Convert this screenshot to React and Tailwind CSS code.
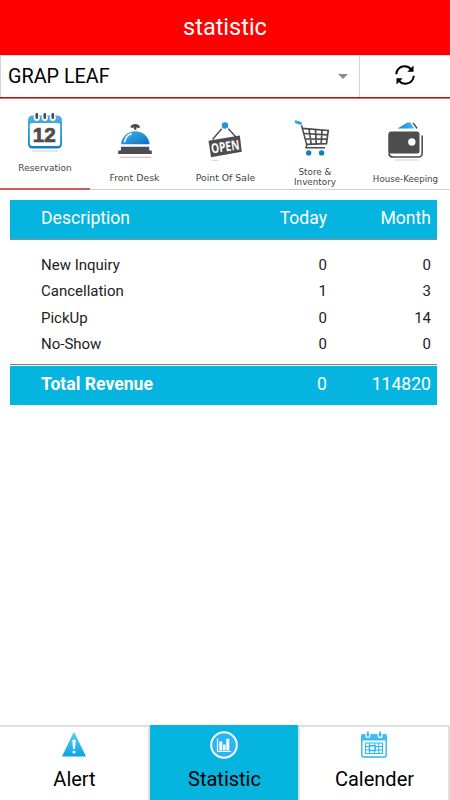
const ROWS = [
  { name: 'New Inquiry', today: '0', month: '0' },
  { name: 'Cancellation', today: '1', month: '3' },
  { name: 'PickUp', today: '0', month: '14' },
  { name: 'No-Show', today: '0', month: '0' },
]

function ReservationIcon() {
  return (
    <svg viewBox="0 0 34 40" className="w-[34px] h-10">
      <defs>
        <linearGradient id="cal" x1="0" y1="0" x2="0" y2="1">
          <stop offset="0" stopColor="#4fb4e4" />
          <stop offset="1" stopColor="#0d7fc4" />
        </linearGradient>
      </defs>
      <rect x="0" y="2.5" width="34" height="33" rx="4.5" fill="url(#cal)" />
      <rect x="1.8" y="10" width="30.4" height="23" rx="2.5" fill="#fff" />
      {[8.5, 16.5, 24.5].map((x) => (
        <g key={x}>
          <circle cx={x + 0.3} cy="4.8" r="3.1" fill="#fff" />
          <rect x={x - 1} y="0" width="2.6" height="6" rx="1.2" fill="#4d4d4f" />
        </g>
      ))}
      <text x="16.3" y="28.5" textAnchor="middle" fontSize="20" fontWeight="700" fontFamily="Liberation Sans, sans-serif" textLength="23" lengthAdjust="spacingAndGlyphs" fill="#4d4d4f" stroke="#4d4d4f" strokeWidth="0.7">12</text>
      <path d="M4 38h26" stroke="#cfcfcf" strokeWidth="1" />
    </svg>
  )
}

function BellIcon() {
  return (
    <svg viewBox="0 0 34 37" className="w-[34px] h-[37px]">
      <defs>
        <linearGradient id="bell" x1="0" y1="0" x2="1" y2="1">
          <stop offset="0" stopColor="#45b2e6" />
          <stop offset="1" stopColor="#0873bd" />
        </linearGradient>
      </defs>
      <path d="M12.5 4.500c0-2 2-3.400 4.700-3.400s4.800 1.400 4.800 3.400c-1.300.7-2 .3-3.600.1v2.200h-2.400v-2.200c-1.300.2-2.200.5-3.500-.1z" fill="#4d4d4f" />
      <path d="M3 21.200C3.500 13.500 10 8.300 17.200 8.300S31 13.500 31.600 21.200z" fill="url(#bell)" />
      <path d="M6.800 18.500c.7-4 3-6.400 6.200-7.600" stroke="#e6f5fc" strokeWidth="1.800" fill="none" strokeLinecap="round" />
      <path d="M3 23.800h28.200v3.400l2.600.6V31H.2v-3.200l2.800-.6z" fill="#4d4d4f" />
      <path d="M2 34.400h31" stroke="#cacaca" strokeWidth="1.400" />
    </svg>
  )
}

function OpenIcon() {
  return (
    <svg viewBox="0 0 34 42" className="w-[34px] h-[42px] overflow-visible">
      <path d="M4.500 17.500 13.700 6.800M20.300 6.800 28 15" stroke="#4d4d4f" strokeWidth="1.400" fill="none" />
      <circle cx="17" cy="3.500" r="3.200" fill="#1d97da" />
      <path d="M.5 18.800 31.800 13.500 33.800 29.800 3 35.300z" fill="#4d4d4f" />
      <text x="17.200" y="29.500" textAnchor="middle" fontSize="13.500" fontWeight="700" fontFamily="Open Sans, sans-serif" textLength="28.500" lengthAdjust="spacingAndGlyphs" fill="#fff" transform="rotate(-8 17 25)">OPEN</text>
      <path d="M3 38.300h8" stroke="#d6d6d6" strokeWidth="1" />
    </svg>
  )
}

function CartIcon() {
  return (
    <svg viewBox="0 0 42 37" className="w-[42px] h-[37px]">
      <path d="M2 1.800l4.600 1.500" stroke="#2aa5e2" strokeWidth="2.800" strokeLinecap="round" />
      <path d="M7.500 5.200 12.800 25l-1 2.800h19.200" stroke="#4d4d4f" strokeWidth="1.500" fill="none" strokeLinejoin="round" />
      <path d="M8.300 8.300 34.200 10.500 32.500 23.600 12.500 24.300M9.600 13.500 33.500 14.900M11 19 33 19.200M15 9l2.200 15M21.500 9.500l.7 14.500M28 10l-.8 14" stroke="#4d4d4f" strokeWidth="1.700" fill="none" />
      <circle cx="14.700" cy="32.900" r="2.700" fill="#0d7fc4" />
      <circle cx="27.600" cy="32.900" r="2.700" fill="#0d7fc4" />
    </svg>
  )
}

function WalletIcon() {
  return (
    <svg viewBox="0 0 36 41" className="w-9 h-[41px]">
      <defs>
        <linearGradient id="note" x1="0" y1="0" x2="1" y2="0">
          <stop offset="0" stopColor="#0d7fc4" />
          <stop offset="1" stopColor="#4cc0ee" />
        </linearGradient>
      </defs>
      <path d="M9.500 6.500 19.500.5h3l3.800 6z" fill="url(#note)" />
      <path d="M25.200 1 29.200 6.500" stroke="#4d4d4f" strokeWidth="1.300" />
      <path d="M34.200 13.500v17.500q0 4-4 4H5q-3.500 0-4-3" stroke="#4d4d4f" strokeWidth="1.600" fill="none" />
      <path d="M1.200 12v20" stroke="#4d4d4f" strokeWidth="1.400" />
      <rect x=".5" y="9.500" width="31" height="22" rx="2.500" fill="#4d4d4f" />
      <circle cx="23.800" cy="20" r="3.700" fill="#fff" />
      <path d="M6.500 38h24" stroke="#d0d0d0" strokeWidth="1" />
    </svg>
  )
}

function RefreshIcon() {
  return (
    <svg viewBox="0 0 20 20" className="w-5 h-5">
      <path d="M1.200 9.200C1.500 4.500 5 1.300 9.500 1.300c2.800 0 4.800 1 6.300 2.900M18.800 10.800C18.500 15.500 15 18.700 10.500 18.700c-2.800 0-4.800-1-6.300-2.900" stroke="#000" strokeWidth="2" fill="none" />
      <path d="M18.500.500v6.200h-6.200zM1.500 19.500v-6.200h6.200z" fill="#000" />
    </svg>
  )
}

function AlertIcon() {
  return (
    <svg viewBox="0 0 24 25" className="w-6 h-[25px]">
      <defs>
        <linearGradient id="warn" x1="0" y1="0" x2="0" y2="1">
          <stop offset="0" stopColor="#5fcdf7" />
          <stop offset="1" stopColor="#0aa3e4" />
        </linearGradient>
      </defs>
      <path d="M11 1.500q1-1.800 2 0L24 24.500H0z" fill="url(#warn)" />
      <path d="M10.300 8q1.700-1 3.400 0l-.7 9h-2z" fill="#fff" />
      <circle cx="12" cy="20" r="1.600" fill="#fff" />
    </svg>
  )
}

function ChartIcon() {
  return (
    <svg viewBox="0 0 28 28" className="w-7 h-7">
      <circle cx="14" cy="14" r="12.800" fill="#29b6f6" stroke="#fff" strokeWidth="2" />
      <path d="M7.500 7.500v13h13.500" stroke="#fff" strokeWidth="1.200" fill="none" />
      <path d="M9.300 10.500h3v9h-3zM13 13.500h2.600v6h-2.600zM16.300 7.800h3v11.700h-3z" fill="#fff" />
    </svg>
  )
}

function CalendarIcon() {
  return (
    <svg viewBox="0 0 26 27" className="w-[26px] h-[27px]">
      <rect x=".8" y="4" width="24.400" height="22" rx="1.500" fill="#fff" stroke="#29b6f6" strokeWidth="1.400" />
      <path d="M.3 9.500V4.500q0-1.500 1.500-1.500h22.400q1.500 0 1.500 1.500v5z" fill="#3ebcf7" />
      <path d="M5 2.500v2q0 2 1.900 2t1.900-2v-2M17.200 2.500v2q0 2 1.900 2t1.900-2v-2" stroke="#fff" strokeWidth="1.200" fill="none" />
      <path d="M6.900.500v4M19.100.500v4" stroke="#29b6f6" strokeWidth="1.700" />
      <path d="M4.500 12h17v10.500h-17zM4.500 15.500h17M4.500 19h17M8.500 12v10.500M13.800 12v10.500M17.800 12v10.500" stroke="#29b6f6" strokeWidth="1" fill="none" />
      <path d="M8.500 14.700h5.600v4.800H8.500z" fill="#fff" stroke="#29b6f6" strokeWidth="1.500" />
    </svg>
  )
}

const TABS = [
  { label: 'Reservation', Icon: ReservationIcon, pad: 'pt-[15px]', text: 'mt-[10px] text-[9px]' },
  { label: 'Front Desk', Icon: BellIcon, pad: 'pt-[25px] pr-px', text: 'mt-[13px] text-[9.4px]' },
  { label: 'Point Of Sale', Icon: OpenIcon, pad: 'pt-6', text: 'mt-[9px] pl-px text-[9.3px]' },
  { label: 'Store & Inventory', Icon: CartIcon, pad: 'pt-[22px]', text: 'mt-[10px] w-[50px] text-[8.800px]' },
  { label: 'House-Keeping', Icon: WalletIcon, pad: 'pt-6 pl-px', text: 'mt-[11px] text-[8.700px]' },
]

const NAV = [
  { label: 'Alert', Icon: AlertIcon, box: 'bg-white border-t-2 border-r-2 border-[#e0e0e0]', icon: 'pt-[5px] h-[39px]' },
  { label: 'Statistic', Icon: ChartIcon, box: 'bg-[#06b4e0] pt-0.5 border-r-2 border-[#e0e0e0]', icon: 'pt-1 h-[39px]' },
  { label: 'Calender', Icon: CalendarIcon, box: 'bg-white border-t-2 border-r-2 border-[#e0e0e0]', icon: 'pt-1 h-[39px]' },
]

export default function App() {
  return (
    <div className="w-[450px] h-[800px] flex flex-col bg-white overflow-hidden font-[Roboto,sans-serif] text-black">
      <header className="h-[55px] flex items-center justify-center bg-[#ff0000] text-white text-[23.5px]">
        statistic
      </header>

      {/* Property selector */}
      <div className="h-[43px] flex border-t border-t-[#dcdcdc] border-b border-b-[#ae1414] shadow-[0_1px_0_#d07070]">
        <div className="w-[360px] flex items-center justify-between pl-[7px] pr-[11px] border-x border-[#d4d4d4]">
          <span className="text-[19.8px]">GRAP LEAF</span>
          <svg viewBox="0 0 10 5" className="w-2.5 h-[5px]"><path d="M0 0h10L5 5z" fill="#8b8b8b" /></svg>
        </div>
        <div className="flex-1 flex items-center justify-center pb-[3px]">
          <RefreshIcon />
        </div>
      </div>

      {/* Module tabs */}
      <nav className="h-[92px] flex font-['DejaVu_Sans',sans-serif] text-[#444]">
        {TABS.map(({ label, Icon, pad, text }, i) => (
          <div
            key={label}
            className={`w-[90px] flex flex-col items-center ${pad} ${i === 0 ? 'border-b-2 border-[#cf5a5a]' : 'border-b border-[#d0d0d0]'}`}
          >
            <Icon />
            <span className={`text-center leading-[10px] ${text}`}>{label}</span>
          </div>
        ))}
      </nav>

      {/* Statistics table */}
      <main className="flex-1 pt-2.5 pl-2.5 pr-[13px]">
        <div className="h-[40px] flex items-center pb-[3px] pl-[31px] pr-1.5 bg-[#06b4e0] border-b border-[#8a9092] text-white text-[17.6px]">
          <span className="flex-1">Description</span>
          <span className="w-[90px] text-right">Today</span>
          <span className="w-[104px] text-right">Month</span>
        </div>
        <div className="pt-[12.2px] pb-[6.6px] pl-[31px] pr-1.5 text-[15px] text-[#222]">
          {ROWS.map((r) => (
            <div key={r.name} className="h-[26.3px] flex items-center">
              <span className="flex-1">{r.name}</span>
              <span className="w-[90px] text-right">{r.today}</span>
              <span className="w-[104px] text-right">{r.month}</span>
            </div>
          ))}
        </div>
        <div className="border-t border-[#808080] pt-px">
          <div className="h-[39px] flex items-center pb-[3px] pl-[31px] pr-1.5 bg-[#06b4e0] text-white text-[17.6px]">
            <span className="flex-1 font-bold">Total Revenue</span>
            <span className="w-[90px] text-right">0</span>
            <span className="w-[104px] text-right">114820</span>
          </div>
        </div>
      </main>

      <footer className="h-[75px] flex">
        {NAV.map(({ label, Icon, box, icon }) => (
          <div key={label} className={`w-[150px] flex flex-col items-center ${box}`}>
            <div className={icon}>
              <Icon />
            </div>
            <span className="text-[20px] leading-[27px] pl-px">{label}</span>
          </div>
        ))}
      </footer>
    </div>
  )
}
